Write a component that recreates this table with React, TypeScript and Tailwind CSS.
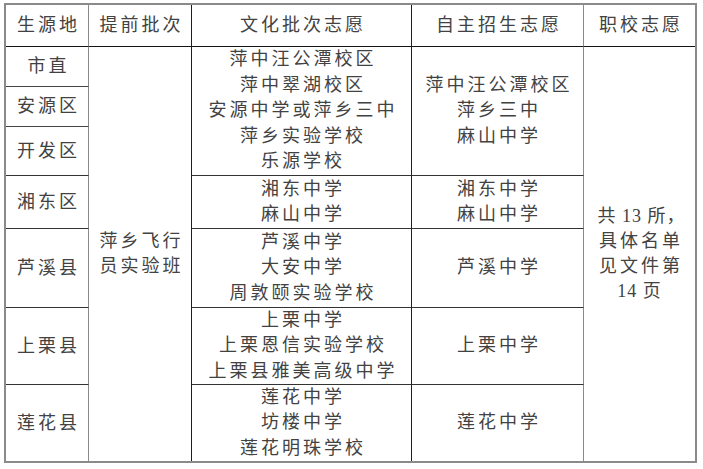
import React from "react";

// ============================================================
// Table data
// ============================================================

interface Block {
  region: string[];
  culture: string[];
  self: string[];
  rows: number;
}

const BLOCKS: Block[] = [
  {
    region: ["市直", "安源区", "开发区"],
    culture: ["萍中汪公潭校区", "萍中翠湖校区", "安源中学或萍乡三中", "萍乡实验学校", "乐源学校"],
    self: ["萍中汪公潭校区", "萍乡三中", "麻山中学"],
    rows: 3,
  },
  { region: ["湘东区"], culture: ["湘东中学", "麻山中学"], self: ["湘东中学", "麻山中学"], rows: 1 },
  { region: ["芦溪县"], culture: ["芦溪中学", "大安中学", "周敦颐实验学校"], self: ["芦溪中学"], rows: 1 },
  { region: ["上栗县"], culture: ["上栗中学", "上栗恩信实验学校", "上栗县雅美高级中学"], self: ["上栗中学"], rows: 1 },
  { region: ["莲花县"], culture: ["莲花中学", "坊楼中学", "莲花明珠学校"], self: ["莲花中学"], rows: 1 },
];

const HEADERS = ["生源地", "提前批次", "文化批次志愿", "自主招生志愿", "职校志愿"];

function Lines({ items }: { items: string[] }) {
  return (
    <div className="flex flex-col items-center">
      {items.map((t) => (
        <span key={t} className="whitespace-nowrap leading-[25.5px] tracking-[3px] pl-[3px]">
          {t}
        </span>
      ))}
    </div>
  );
}

// ============================================================
// Main
// ============================================================

export default function App() {
  const cell = "flex items-center justify-center";
  return (
    <div className="w-[703px] h-[469px] bg-white pl-[4px] pt-[3px]">
      <div
        className="w-[693px] h-[460px] border-2 border-[#8a8a8a] grid grid-cols-[83px_103px_220px_172px_111px] grid-rows-[42px_40px_40px_49px_53px_79px_77px_76px] text-[18px] text-[#424242]"
        style={{ fontFamily: '"Liberation Serif", "Noto Sans CJK SC", serif' }}
      >
        {HEADERS.map((h, i) => (
          <div
            key={h}
            className={`${cell} border-b border-[#151515] ${
              i === 4 ? "" : i === 0 || i === 3 ? "border-r border-r-[#8a8a8a]" : "border-r border-r-[#1f1f1f]"
            }`}
          >
            <span className="tracking-[3px] pl-[3px] whitespace-nowrap">{h}</span>
          </div>
        ))}

        {/* first block: 市直 / 安源区 / 开发区 */}
        <div className={`${cell} border-b border-r border-b-[#444] border-r-[#8a8a8a]`}>
          <span className="tracking-[3px] pl-[3px]">市直</span>
        </div>
        <div className={`${cell} row-span-7 border-r border-[#1f1f1f]`}>
          <Lines items={["萍乡飞行", "员实验班"]} />
        </div>
        <div className={`${cell} row-span-3 border-b border-r border-b-[#333] border-r-[#1f1f1f]`}>
          <Lines items={BLOCKS[0].culture} />
        </div>
        <div className={`${cell} row-span-3 border-b border-r border-b-[#333] border-r-[#8a8a8a]`}>
          <Lines items={BLOCKS[0].self} />
        </div>
        <div className={`${cell} row-span-7`}>
          <div className="flex flex-col items-center">
            <span className="leading-[25px] whitespace-nowrap tracking-[1px] pl-[4px]">
              共 13 所，
            </span>
            <span className="leading-[25px] whitespace-nowrap tracking-[3px] pl-[3px]">具体名单</span>
            <span className="leading-[25px] whitespace-nowrap tracking-[3px] pl-[3px]">见文件第</span>
            <span className="leading-[25px] whitespace-nowrap tracking-[1px]">14 页</span>
          </div>
        </div>
        <div className={`${cell} border-b border-r border-b-[#444] border-r-[#8a8a8a]`}>
          <span className="tracking-[3px] pl-[3px]">安源区</span>
        </div>
        <div className={`${cell} border-b border-r border-b-[#333] border-r-[#8a8a8a]`}>
          <span className="tracking-[3px] pl-[3px]">开发区</span>
        </div>

        {BLOCKS.slice(1).map((b, i) => {
          const last = i === BLOCKS.length - 2;
          const bb = last ? "" : "border-b border-b-[#333]";
          return (
            <React.Fragment key={b.region[0]}>
              <div className={`${cell} ${bb} border-r border-r-[#8a8a8a]`}>
                <span className="tracking-[3px] pl-[3px]">{b.region[0]}</span>
              </div>
              <div className={`${cell} col-start-3 ${bb} border-r border-r-[#1f1f1f]`}>
                <Lines items={b.culture} />
              </div>
              <div className={`${cell} ${bb} border-r border-r-[#8a8a8a]`}>
                <Lines items={b.self} />
              </div>
            </React.Fragment>
          );
        })}
      </div>
    </div>
  );
}
